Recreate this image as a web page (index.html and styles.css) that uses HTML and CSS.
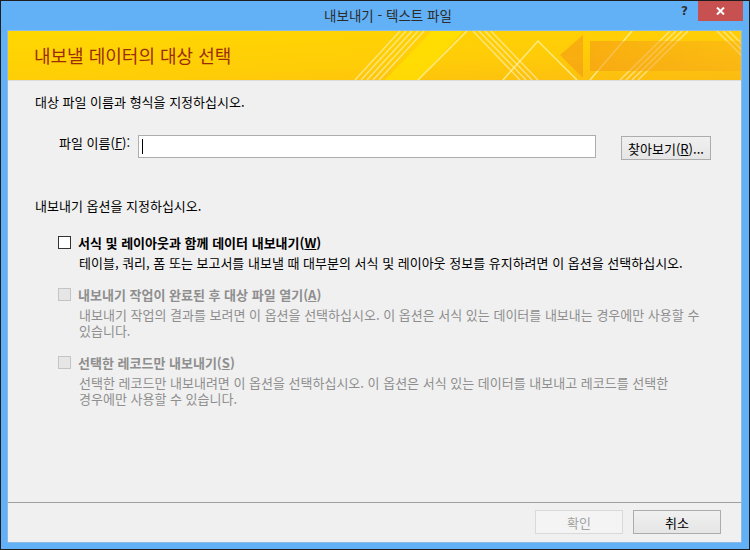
FILE: index.html
```html
<!DOCTYPE html>
<html lang="ko">
<head>
    <meta charset="UTF-8">
    <title>내보내기 - 텍스트 파일</title>
    <link rel="stylesheet" href="styles.css">
</head>
<body>
    <div class="window">
        <div class="titlebar">
            <span></span>
            <span class="title">내보내기 - 텍스트 파일</span>
            <div class="controls">
                <span class="help">?</span>
                <span class="close">
                    <svg width="9" height="8" viewBox="0 0 9 8">
                        <path d="M1 0.5 L8 7.5 M8 0.5 L1 7.5" stroke="#fff" stroke-width="2"/>
                    </svg>
                </span>
            </div>
        </div>

        <div class="client">
            <div class="banner">
                <svg class="banner-art" viewBox="0 0 733 49" preserveAspectRatio="none">
                    <defs>
                        <linearGradient id="bg" x1="0" y1="0" x2="1" y2="1">
                            <stop offset="0" stop-color="#ffd800"/>
                            <stop offset="0.6" stop-color="#ffcc08"/>
                            <stop offset="1" stop-color="#fbbb12"/>
                        </linearGradient>
                        <linearGradient id="arrow" x1="0" y1="0" x2="1" y2="0">
                            <stop offset="0" stop-color="#f39516" stop-opacity="0.55"/>
                            <stop offset="1" stop-color="#f5a01c" stop-opacity="0.3"/>
                        </linearGradient>
                    </defs>
                    <rect width="733" height="49" fill="url(#bg)"/>
                    <polygon points="377,49 410,49 455,0 424,0" fill="#ffe600" opacity="0.6"/>
                    <g fill="none" stroke="#fff" stroke-opacity="0.45" stroke-width="1.5">
                        <path d="M347 49 L392 0 M353 49 L398 0 M359 49 L404 0 M365 49 L410 0 M371 49 L416 0"/>
                        <path d="M465 0 L512 49 M471 0 L518 49 M477 0 L524 49 M483 0 L530 49"/>
                        <path d="M612 49 L662 0 M618 49 L668 0 M624 49 L674 0 M630 49 L680 0"/>
                        <path d="M709 0 L758 49 M715 0 L764 49 M721 0 L770 49"/>
                    </g>
                    <g fill="none" stroke="#fff3a0" stroke-opacity="0.8" stroke-width="1.5">
                        <path d="M410 49 L459 0"/>
                        <path d="M495 49 L530 10 L569 49"/>
                        <path d="M582 49 L624 0"/>
                    </g>
                    <polygon points="552,24 575,4 575,47" fill="#f39516" opacity="0.55"/>
                    <rect x="582" y="10" width="151" height="30" fill="url(#arrow)"/>
                </svg>
                <h1 class="banner-title">내보낼 데이터의 대상 선택</h1>
            </div>

            <div class="content">
                <p class="intro">대상 파일 이름과 형식을 지정하십시오.</p>

                <div class="file-row">
                    <label class="file-label">파일 이름(<u>F</u>):</label>
                    <div class="field"><span class="caret"></span></div>
                    <button class="btn browse">찾아보기(<u>R</u>)...</button>
                </div>

                <p class="intro options-intro">내보내기 옵션을 지정하십시오.</p>

                <div class="option">
                    <div class="option-head">
                        <span class="check"></span>
                        <span class="option-label">서식 및 레이아웃과 함께 데이터 내보내기(<u>W</u>)</span>
                    </div>
                    <p class="option-desc">테이블, 쿼리, 폼 또는 보고서를 내보낼 때 대부분의 서식 및 레이아웃 정보를 유지하려면 이 옵션을 선택하십시오.</p>
                </div>

                <div class="option disabled">
                    <div class="option-head">
                        <span class="check"></span>
                        <span class="option-label">내보내기 작업이 완료된 후 대상 파일 열기(<u>A</u>)</span>
                    </div>
                    <p class="option-desc">내보내기 작업의 결과를 보려면 이 옵션을 선택하십시오. 이 옵션은 서식 있는 데이터를 내보내는 경우에만 사용할 수<br>있습니다.</p>
                </div>

                <div class="option disabled">
                    <div class="option-head">
                        <span class="check"></span>
                        <span class="option-label">선택한 레코드만 내보내기(<u>S</u>)</span>
                    </div>
                    <p class="option-desc">선택한 레코드만 내보내려면 이 옵션을 선택하십시오. 이 옵션은 서식 있는 데이터를 내보내고 레코드를 선택한<br>경우에만 사용할 수 있습니다.</p>
                </div>
            </div>

            <div class="footer">
                <button class="btn" disabled>확인</button>
                <button class="btn">취소</button>
            </div>
        </div>
    </div>
</body>
</html>
```

FILE: styles.css
```css
* {
    box-sizing: border-box;
}

body {
    margin: 0;
    font-family: "Noto Sans CJK KR", "Malgun Gothic", sans-serif;
    font-size: 13px;
    color: #000;
    background: #fff;
}

.window {
    width: 750px;
    height: 550px;
    border: 1px solid #1e1e1e;
    background-color: #62b1f6;
    display: flex;
    flex-direction: column;
}

.titlebar {
    height: 29px;
    display: grid;
    grid-template-columns: 1fr auto 1fr;
    align-items: start;
    padding-left: 26px;
}

.title {
    font-size: 13.5px;
    line-height: 29px;
    color: #2b2b2b;
}

.controls {
    display: flex;
    justify-content: flex-end;
    align-items: flex-start;
}

.help {
    font-family: "DejaVu Sans", sans-serif;
    font-weight: bold;
    font-size: 12px;
    line-height: 20px;
    color: #333;
    margin-right: 10px;
}

.close {
    width: 45px;
    height: 20px;
    background-color: #c75050;
    margin-right: 6px;
    display: flex;
    align-items: center;
    justify-content: center;
}

.client {
    flex: 1;
    margin: 0 7px 6px 6px;
    border: 1px solid #8bbbe9;
    background-color: #f0f0f0;
    display: flex;
    flex-direction: column;
}

.banner {
    height: 50px;
    border-bottom: 1px solid #dcdcdc;
    display: grid;
}

.banner-art,
.banner-title {
    grid-area: 1 / 1;
}

.banner-art {
    width: 100%;
    height: 49px;
    display: block;
}

.banner-title {
    margin: 0;
    padding-left: 26px;
    font-size: 18px;
    font-weight: normal;
    line-height: 49px;
    color: #9c2c08;
}

.content {
    flex: 1;
    padding: 13px 0 0 27px;
}

.intro {
    margin: 0;
    line-height: 16px;
}

.file-row {
    display: flex;
    align-items: flex-start;
    margin-top: 25px;
}

.file-label {
    margin-left: 24px;
    line-height: 16px;
    width: 70px;
    white-space: nowrap;
}

.field {
    width: 458px;
    height: 23px;
    margin-left: 9px;
    border: 1px solid #adadad;
    background: #fff;
    padding: 3px 0 0 3px;
}

.caret {
    display: block;
    width: 1px;
    height: 15px;
    background: #000;
}

.btn {
    font-family: inherit;
    font-size: 13px;
    color: #000;
    height: 24px;
    width: 88px;
    padding: 0;
    border: 1px solid #acacac;
    background: linear-gradient(#f0f0f0, #e5e5e5);
    border-radius: 0;
}

.btn[disabled] {
    color: #a3a3a3;
    border-color: #d9d9d9;
    background: #f4f4f4;
}

.browse {
    width: 90px;
    margin: 1px 0 0 25px;
}

.options-intro {
    margin-top: 38px;
}

.option {
    margin: 20px 0 0 23px;
}

.option + .option {
    margin-top: 15px;
}

.option-head {
    display: flex;
    align-items: center;
    height: 16px;
    font-weight: bold;
}

.check {
    width: 13px;
    height: 13px;
    border: 1px solid #333;
    background: #fff;
    margin-right: 7px;
}

.option-desc {
    margin: 5px 0 0 21px;
    line-height: 16px;
}

.disabled {
    color: #8e8e8e;
}

.disabled .check {
    border-color: #c4c4c4;
    background: #e6e6e6;
}

.footer {
    height: 40px;
    border-top: 1px solid #a0a0a0;
    display: flex;
    justify-content: flex-end;
    gap: 10px;
    padding: 7px 20px 0 0;
}
```
